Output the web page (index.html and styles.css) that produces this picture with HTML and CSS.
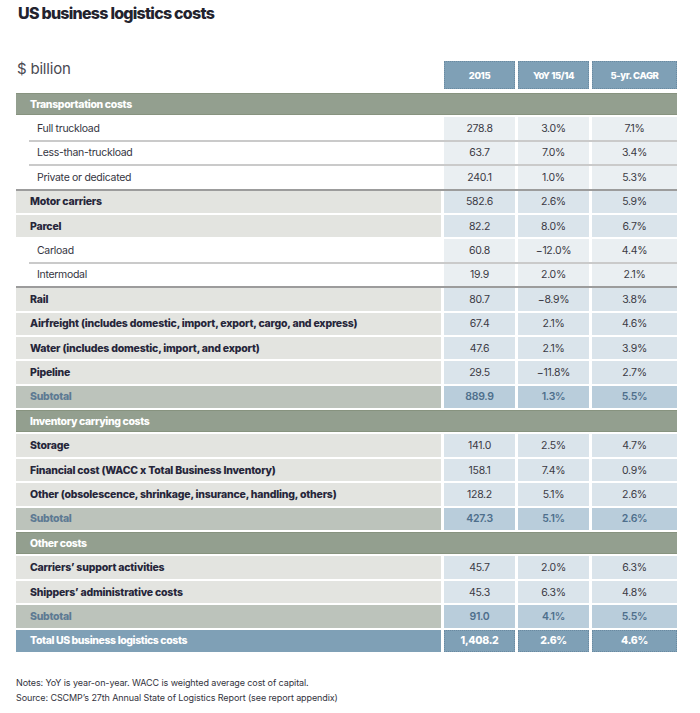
FILE: index.html
```html
<!DOCTYPE html>
<html>
<head>
<meta charset="utf-8">
<link rel="stylesheet" href="styles.css">
</head>
<body>
<div class="page">
  <h1 class="title">US business logistics costs</h1>
  <div class="table">
    <div class="row head">
      <div class="unit">$ billion</div>
      <div class="hc">2015</div>
      <div class="hc">YoY 15/14</div>
      <div class="hc">5-yr. CAGR</div>
    </div>

    <div class="row grp first"><div class="lab">Transportation costs</div></div>
    <div class="row ind"><div class="lab">Full truckload</div><div class="v">278.8</div><div class="v">3.0%</div><div class="v">7.1%</div></div>
    <div class="row ind lt"><div class="lab">Less-than-truckload</div><div class="v">63.7</div><div class="v">7.0%</div><div class="v">3.4%</div></div>
    <div class="row ind lt"><div class="lab">Private or dedicated</div><div class="v">240.1</div><div class="v">1.0%</div><div class="v">5.3%</div></div>
    <div class="row bold dk"><div class="lab">Motor carriers</div><div class="v">582.6</div><div class="v">2.6%</div><div class="v">5.9%</div></div>
    <div class="row bold"><div class="lab">Parcel</div><div class="v">82.2</div><div class="v">8.0%</div><div class="v">6.7%</div></div>
    <div class="row ind"><div class="lab">Carload</div><div class="v">60.8</div><div class="v">−12.0%</div><div class="v">4.4%</div></div>
    <div class="row ind lt"><div class="lab">Intermodal</div><div class="v">19.9</div><div class="v">2.0%</div><div class="v">2.1%</div></div>
    <div class="row bold dk"><div class="lab">Rail</div><div class="v">80.7</div><div class="v">−8.9%</div><div class="v">3.8%</div></div>
    <div class="row bold"><div class="lab">Airfreight (includes domestic, import, export, cargo, and express)</div><div class="v">67.4</div><div class="v">2.1%</div><div class="v">4.6%</div></div>
    <div class="row bold"><div class="lab">Water (includes domestic, import, and export)</div><div class="v">47.6</div><div class="v">2.1%</div><div class="v">3.9%</div></div>
    <div class="row bold"><div class="lab">Pipeline</div><div class="v">29.5</div><div class="v">−11.8%</div><div class="v">2.7%</div></div>
    <div class="row sub"><div class="lab">Subtotal</div><div class="v">889.9</div><div class="v">1.3%</div><div class="v">5.5%</div></div>

    <div class="row grp"><div class="lab">Inventory carrying costs</div></div>
    <div class="row bold"><div class="lab">Storage</div><div class="v">141.0</div><div class="v">2.5%</div><div class="v">4.7%</div></div>
    <div class="row bold"><div class="lab">Financial cost (WACC x Total Business Inventory)</div><div class="v">158.1</div><div class="v">7.4%</div><div class="v">0.9%</div></div>
    <div class="row bold"><div class="lab">Other (obsolescence, shrinkage, insurance, handling, others)</div><div class="v">128.2</div><div class="v">5.1%</div><div class="v">2.6%</div></div>
    <div class="row sub"><div class="lab">Subtotal</div><div class="v">427.3</div><div class="v">5.1%</div><div class="v">2.6%</div></div>

    <div class="row grp"><div class="lab">Other costs</div></div>
    <div class="row bold"><div class="lab">Carriers’ support activities</div><div class="v">45.7</div><div class="v">2.0%</div><div class="v">6.3%</div></div>
    <div class="row bold"><div class="lab">Shippers’ administrative costs</div><div class="v">45.3</div><div class="v">6.3%</div><div class="v">4.8%</div></div>
    <div class="row sub"><div class="lab">Subtotal</div><div class="v">91.0</div><div class="v">4.1%</div><div class="v">5.5%</div></div>
    <div class="row total"><div class="lab">Total US business logistics costs</div><div class="v">1,408.2</div><div class="v">2.6%</div><div class="v">4.6%</div></div>
  </div>
  <div class="notes">
    <p>Notes: YoY is year-on-year. WACC is weighted average cost of capital.</p>
    <p>Source: CSCMP’s 27th Annual State of Logistics Report (see report appendix)</p>
  </div>
</div>
</body>
</html>
```

FILE: styles.css
```css
html, body {
  margin: 0;
  padding: 0;
  background: #ffffff;
}
body {
  font-family: Inter, "Open Sans", "Liberation Sans", sans-serif;
  color: #2b2b38;
}
.page {
  padding: 3px 0 0 16px;
  width: 661px;
}
.title {
  margin: 0;
  font-size: 16px;
  line-height: 20px;
  font-weight: 800;
  letter-spacing: -0.75px;
  color: #23232e;
  padding-left: 2px;
}
.table {
  margin-top: 38px;
}
.row {
  display: grid;
  grid-template-columns: 425px 71px 71px 85px;
  column-gap: 3px;
  padding-top: 2px;
  background: #ffffff;
}
.row > div {
  height: 22.4px;
  display: flex;
  align-items: center;
  font-size: 10.5px;
  letter-spacing: -0.3px;
}
.row .v {
  justify-content: center;
}
.lab {
  padding-left: 14px;
  white-space: nowrap;
}

/* header */
.row.head {
  padding-top: 0;
}
.row.head > div {
  height: 28px;
}
.row.head > .unit {
  align-items: flex-start;
  padding-left: 1px;
  font-size: 15px;
  line-height: 15px;
  color: #4a4a52;
  letter-spacing: -0.2px;
  font-weight: 400;
}
.row.head > .hc {
  background: #7fa0b6;
  color: #ffffff;
  font-weight: 800;
  justify-content: center;
  font-size: 9.5px;
  letter-spacing: -0.4px;
  box-sizing: border-box;
  border: 1px dotted #6a8aa1;
}

/* group header */
.row.grp > .lab {
  grid-column: 1 / -1;
  background: #939f8f;
  color: #ffffff;
  font-weight: 800;
  letter-spacing: -0.35px;
  box-sizing: border-box;
  border-top: 1px solid #87937f;
  border-bottom: 1px solid #87937f;
}
.row.first {
  padding-top: 4px;
}

/* indented rows */
.row.ind .lab {
  padding-left: 21px;
  background: #ffffff;
  color: #35353f;
}
.row.ind .v {
  background: #eaeff2;
  color: #3a3a44;
}
.row.lt {
  background: #ffffff linear-gradient(#cacaca, #cacaca) 13px 0 / calc(100% - 13px) 2px no-repeat;
}
.row.dk {
  background: #ffffff linear-gradient(#9c9c9c, #9c9c9c) 0 0 / 100% 2px no-repeat;
}

/* bold rows */
.row.bold .lab {
  background: #e3e4e0;
  font-weight: 800;
  letter-spacing: -0.2px;
  color: #26263a;
}
.row.bold .v {
  background: #dae4eb;
  color: #3a3a44;
}

/* subtotal */
.row.sub .lab {
  background: #bcc3bb;
  color: #5d7a93;
  font-weight: 800;
}
.row.sub .v {
  background: #b9cddb;
  color: #4e6f8c;
  font-weight: 600;
}

/* total */
.row.total > div {
  background: #7fa0b6;
  color: #ffffff;
  font-weight: 800;
  box-sizing: border-box;
  border: 1px dotted #6a8aa1;
}
.row.total > .lab {
  border: none;
  letter-spacing: -0.4px;
}

.notes {
  margin-top: 23px;
  font-size: 9px;
  line-height: 15px;
  color: #33333d;
  letter-spacing: -0.1px;
}
.notes p {
  margin: 0;
}
```
